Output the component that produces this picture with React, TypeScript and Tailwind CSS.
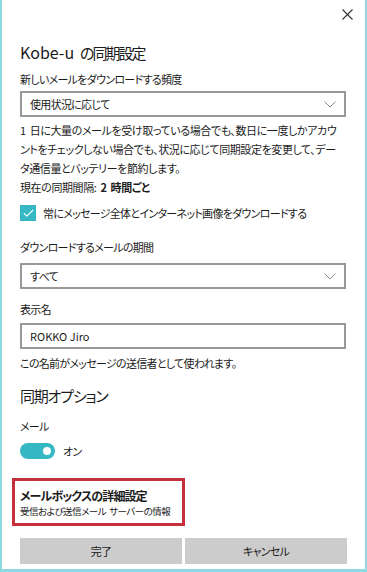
import { Check } from 'lucide-react'

const font = "font-['Noto_Sans_CJK_JP','Noto_Sans',sans-serif] [font-feature-settings:'palt']"
const body = 'text-[11px] tracking-[-0.7px]'

function Chevron() {
  return (
    <svg width="12" height="7" viewBox="0 0 12 7" fill="none">
      <path d="M0.5 0.5 L6 6 L11.5 0.5" stroke="#8a8a8a" strokeWidth="1" />
    </svg>
  )
}

function Select({ value }: { value: string }) {
  return (
    <div className={`h-[26px] border-2 border-[#999999] flex items-center justify-between pl-[8px] pr-[8px] leading-none text-[#1b1b1b] ${body}`}>
      <span>{value}</span>
      <Chevron />
    </div>
  )
}

export default function App() {
  return (
    <div className={`${font} w-[367px] h-[572px] bg-white border-l-2 border-r-2 border-b-[3px] border-[#8fd9e2] text-[#1b1b1b] overflow-hidden`}>
      <div className="h-[38px] flex justify-end items-start pt-[9px] pr-[12px]">
        <svg width="11" height="11" viewBox="0 0 11 11">
          <path d="M0.5 0.5 L10.5 10.5 M10.5 0.5 L0.5 10.5" stroke="#333" strokeWidth="1.1" />
        </svg>
      </div>
      <div className="pl-[18px] pr-[19px] flex flex-col">
        <div className="leading-[28px] whitespace-nowrap">
          <span className="text-[16px]">Kobe-u</span>
          <span className="ml-[6px] text-[15px] tracking-[-2px]">の同期設定</span>
        </div>
        <div className={`mt-[4px] leading-[16px] ${body}`}>新しいメールをダウンロードする頻度</div>
        <div className="mt-[4px]">
          <Select value="使用状況に応じて" />
        </div>
        <div className="mt-[4px] leading-[19px] whitespace-nowrap text-[11px] tracking-[-0.4px]">
          <div>1<span className="ml-[4px]">日に大量のメールを受け取っている場合でも、数日に一度しかアカウ</span></div>
          <div>ントをチェックしない場合でも、状況に応じて同期設定を変更して、デー</div>
          <div>タ通信量とバッテリーを節約します。</div>
          <div>
            現在の同期間隔:<span className="ml-[4px] font-bold">2</span>
            <span className="ml-[4px] font-bold">時間ごと</span>
          </div>
        </div>
        <div className={`mt-[8px] flex items-center gap-[7px] leading-[16px] whitespace-nowrap ${body}`}>
          <div className="w-[16px] h-[16px] bg-[#35b7c4] flex items-center justify-center shrink-0">
            <Check className="w-[13px] h-[13px] text-white" strokeWidth={2} />
          </div>
          <span>常にメッセージ全体とインターネット画像をダウンロードする</span>
        </div>
        <div className={`mt-[18px] leading-[16px] ${body}`}>ダウンロードするメールの期間</div>
        <div className="mt-[8px]">
          <Select value="すべて" />
        </div>
        <div className={`mt-[12px] leading-[16px] ${body}`}>表示名</div>
        <div className="mt-[6px] h-[26px] border-2 border-[#999999] flex items-center pl-[8px] text-[11px] leading-none">
          ROKKO Jiro
        </div>
        <div className={`mt-[6px] leading-[16px] ${body}`}>この名前がメッセージの送信者として使われます。</div>
        <div className="mt-[13px] text-[15px] tracking-[-1.2px] leading-[24px]">同期オプション</div>
        <div className={`mt-[10px] leading-[16px] ${body}`}>メール</div>
        <div className={`mt-[9px] flex items-center gap-[8px] leading-[16px] ${body}`}>
          <div className="w-[35px] h-[16px] rounded-full bg-[#35b7c4] flex items-center justify-end pr-[4px]">
            <div className="w-[8px] h-[8px] rounded-full bg-white" />
          </div>
          <span>オン</span>
        </div>
        <div className="mt-[19px] -ml-[8px] w-[173px] h-[48px] border-[3px] border-[#c4313b] pl-[5px] flex flex-col justify-center whitespace-nowrap">
          <div className="text-[12px] tracking-[-0.9px] leading-[17px] font-bold">メールボックスの詳細設定</div>
          <div className="text-[9.5px] tracking-[-0.5px] leading-[14px]">
            受信および送信メール<span className="ml-[3px]">サーバーの情報</span>
          </div>
        </div>
        <div className={`mt-[12px] flex gap-[3px] -mr-[1px] ${body}`}>
          <div className="flex-1 h-[26px] bg-[#cccccc] flex items-center justify-center">完了</div>
          <div className="flex-1 h-[26px] bg-[#cccccc] flex items-center justify-center">キャンセル</div>
        </div>
      </div>
    </div>
  )
}
